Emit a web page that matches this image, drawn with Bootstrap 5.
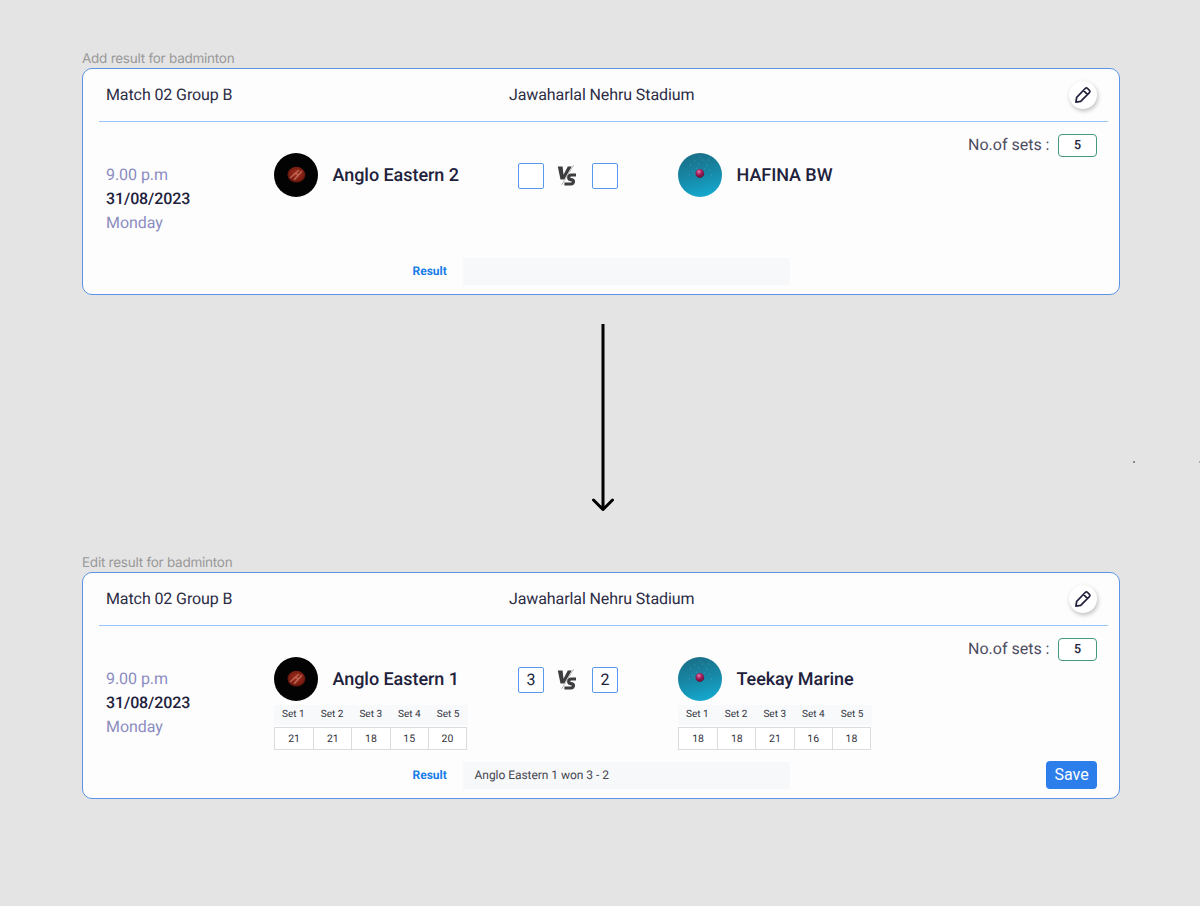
<!DOCTYPE html>
<html lang="en">
<head>
<meta charset="utf-8">
<meta name="viewport" content="width=device-width, initial-scale=1">
<title>Badminton results</title>
<link href="https://cdn.jsdelivr.net/npm/bootstrap@5.3.0/dist/css/bootstrap.min.css" rel="stylesheet">
<style>
body{background:#e4e4e4;font-family:Roboto,"Liberation Sans",sans-serif;color:#21213b;width:1200px;height:906px;overflow:hidden;text-rendering:geometricPrecision}
.board{padding:48px 80px 0 82px}
.frame-label{font:400 13.5px/20px Inter,sans-serif;color:#999;height:20px;letter-spacing:-.25px;padding-top:.6px}
.match{height:227px;border:1px solid #5b93e6;border-radius:10px;background:#fdfdfe}
.match-head{margin:0 11px 0 16px;height:53px;border-bottom:1px solid #98c6f6;padding:0 11px 0 7px;display:grid;grid-template-columns:403px 1fr auto;font-size:16px;line-height:24px;padding-top:13px;color:#2c2c44}
.match-head .head-text{padding-top:.5px;letter-spacing:-.1px}
.edit{width:28px;height:28px;background:#fff;box-shadow:1px 2px 4px rgba(0,0,0,.25);margin-top:-1px}
.edit svg{margin-right:1px}
.match-body{display:grid;grid-template-columns:168px 244px 160px 210px 1fr;height:136px;padding:0 22px 0 23px}
.when{padding-top:41px;font-size:16px;line-height:24px;color:#8b8cc0;letter-spacing:-.05px}
.when b{color:#21213b;font-weight:500;letter-spacing:-.1px}
.team{padding-top:31px}
.team-name{font-size:18px;line-height:24px;font-weight:500;margin-left:14.5px;white-space:nowrap;padding-top:1px;letter-spacing:-.05px}
.score{padding-top:41px;width:100px}
.score-box{width:26px;height:26px;border:1px solid #5b98ef;border-radius:2px;font-size:16px;line-height:24px;text-align:center;background:#fff}
.score svg{position:relative;left:-1px;top:1px}
.sets-line{padding-top:12px;font-size:16px;line-height:22px;color:#4c4c60;white-space:nowrap}
.sets-box{width:39px;height:23px;border:1px solid #43987f;border-radius:4px;font-size:12.5px;line-height:22px;font-weight:500;text-align:center;color:#21213b;margin-left:8.5px;background:#fff}
.set-grid{display:grid;grid-template-columns:repeat(5,38.7px);text-align:center;color:#33343d;width:194px}
.set-head{margin-top:4px;background:#f8f9fb;font-size:10px;line-height:20.8px;height:20px}
.set-values{margin-top:2px;border:1px solid #dcdcde;width:193px;height:23px;grid-template-columns:repeat(5,1fr);font-size:10.5px;line-height:22px;background:#fff}
.set-values span+span{border-left:1px solid #dcdcde}
.match-foot{padding:0 22px 0 329.5px;height:28px;margin-top:-.6px}
.result-label{color:#187ce8;font-size:12px;font-weight:700;width:50.5px}
.result-box{width:327px;height:27px;background:#f7f8fa;font-size:12px;line-height:27px;padding-left:11.5px;color:#45464f;letter-spacing:-.04px}
.btn-save{width:51px;height:28px;background:#2c7eea;color:#fff;border:0;border-radius:4px;padding:0;font-size:16px;line-height:26px}
.between{height:257px;padding:29px 0 0 509px}
.specks{position:absolute;left:1133px;top:461px;width:67px;height:2px}
</style>
</head>
<body>
<svg width="0" height="0" class="position-absolute" aria-hidden="true">
<defs>
<radialGradient id="red" cx=".5" cy=".45" r=".6"><stop offset="0" stop-color="#a8301f"/><stop offset=".7" stop-color="#7b1d12"/><stop offset="1" stop-color="#250503"/></radialGradient>
<linearGradient id="sea" x1=".35" y1="0" x2=".6" y2="1"><stop offset="0" stop-color="#1a6f88"/><stop offset=".5" stop-color="#1688a6"/><stop offset="1" stop-color="#15a9cf"/></linearGradient>
<radialGradient id="pink" cx=".4" cy=".3" r=".7"><stop offset="0" stop-color="#e58ab0"/><stop offset=".4" stop-color="#ad2261"/><stop offset="1" stop-color="#5d1238"/></radialGradient>
<symbol id="ball" viewBox="0 0 44 44"><circle cx="22" cy="22" r="22" fill="#030303"/><ellipse cx="22.4" cy="21.8" rx="9" ry="8" fill="url(#red)"/><path d="M16 25l9-8M20 27l8-9M21 20l4 2.5" stroke="#cf8a76" stroke-width="1.4" fill="none" opacity=".65"/></symbol>
<symbol id="orb" viewBox="0 0 44 44"><circle cx="22" cy="22" r="22" fill="url(#sea)"/><path d="M12 12h.7M16 8h.7M20 11h.7M24 7h.7M28 12h.7M14 18h.7M18 15h.7M26 16h.7M31 17h.7M11 22h.7M22 4h.7M30 7h.7M33 22h.7M16 21h.7" stroke="#7cc3d2" stroke-width=".8" opacity=".8"/><circle cx="21.8" cy="20.5" r="4.4" fill="url(#pink)"/></symbol>
<symbol id="versus" viewBox="0 0 20 24"><path d="M.8 2.5h4.8l.9 8.2 4.3-8.2h4L7.3 15.5H3.5z" fill="#3d3d3f"/><path d="M17 1L4.8 21" stroke="#fdfdfe" stroke-width="1.4"/><path d="M16.6 1.2L4.6 21" stroke="#888" stroke-width=".6"/><path d="M19 11h-4.8c-3 0-3.4 4.1-.6 4.6l1.7.3c2 .5 1.3 4.1-1.3 4.1H7.4" fill="none" stroke="#3d3d3f" stroke-width="3.2"/></symbol>
<symbol id="pencil" viewBox="0 0 18 18"><path d="M11.2 2.5q1.2-1.2 2.4 0l1.8 1.8q1.2 1.2 0 2.4l-8.7 8.7-4.8.8.8-4.9zM9.4 4.4l4.2 4.2" fill="none" stroke="#21213b" stroke-width="1.7" stroke-linejoin="round"/></symbol>
</defs>
</svg>
<main class="board">
<div class="frame-label">Add result for badminton</div>
<section class="match">
 <header class="match-head"><span class="head-text">Match 02 Group B</span><span class="head-text">Jawaharlal Nehru Stadium</span><span class="edit rounded-circle d-flex align-items-center justify-content-center"><svg width="18" height="18"><use href="#pencil"/></svg></span></header>
 <div class="match-body">
  <div class="when">9.00 p.m<br><b>31/08/2023</b><br>Monday</div>
  <div class="team"><div class="d-flex align-items-center"><svg width="44" height="44"><use href="#ball"/></svg><span class="team-name">Anglo Eastern 2</span></div></div>
  <div class="score d-flex align-items-start"><div class="score-box"></div><svg width="20" height="24" class="mx-auto"><use href="#versus"/></svg><div class="score-box"></div></div>
  <div class="team"><div class="d-flex align-items-center"><svg width="44" height="44"><use href="#orb"/></svg><span class="team-name">HAFINA BW</span></div></div>
  <div class="sets-line d-flex justify-content-end"><span>No.of sets :</span><div class="sets-box">5</div></div>
 </div>
 <footer class="match-foot d-flex align-items-center"><span class="result-label">Result</span><div class="result-box"></div></footer>
</section>
<div class="between"><svg width="24" height="188" fill="none" stroke="#000" stroke-width="3"><path d="M12 0v185M2.5 176l9.5 9.5 9.5-9.5" stroke-linejoin="round" stroke-linecap="round"/></svg></div>
<div class="frame-label">Edit result for badminton</div>
<section class="match">
 <header class="match-head"><span class="head-text">Match 02 Group B</span><span class="head-text">Jawaharlal Nehru Stadium</span><span class="edit rounded-circle d-flex align-items-center justify-content-center"><svg width="18" height="18"><use href="#pencil"/></svg></span></header>
 <div class="match-body">
  <div class="when">9.00 p.m<br><b>31/08/2023</b><br>Monday</div>
  <div class="team"><div class="d-flex align-items-center"><svg width="44" height="44"><use href="#ball"/></svg><span class="team-name">Anglo Eastern 1</span></div>
   <div class="set-grid set-head"><span>Set 1</span><span>Set 2</span><span>Set 3</span><span>Set 4</span><span>Set 5</span></div>
   <div class="set-grid set-values"><span>21</span><span>21</span><span>18</span><span>15</span><span>20</span></div></div>
  <div class="score d-flex align-items-start"><div class="score-box">3</div><svg width="20" height="24" class="mx-auto"><use href="#versus"/></svg><div class="score-box">2</div></div>
  <div class="team"><div class="d-flex align-items-center"><svg width="44" height="44"><use href="#orb"/></svg><span class="team-name">Teekay Marine</span></div>
   <div class="set-grid set-head"><span>Set 1</span><span>Set 2</span><span>Set 3</span><span>Set 4</span><span>Set 5</span></div>
   <div class="set-grid set-values"><span>18</span><span>18</span><span>21</span><span>16</span><span>18</span></div></div>
  <div class="sets-line d-flex justify-content-end"><span>No.of sets :</span><div class="sets-box">5</div></div>
 </div>
 <footer class="match-foot d-flex align-items-center"><span class="result-label">Result</span><div class="result-box">Anglo Eastern 1 won 3 - 2</div><button type="button" class="btn btn-primary btn-save ms-auto">Save</button></footer>
</section>
</main>
<svg class="specks"><path d="M0 0h2v2H0z" fill="#888"/><path d="M66 0h1v2h-1z" fill="#aaa"/></svg>
<script src="https://cdn.jsdelivr.net/npm/bootstrap@5.3.0/dist/js/bootstrap.bundle.min.js"></script>
</body>
</html>
